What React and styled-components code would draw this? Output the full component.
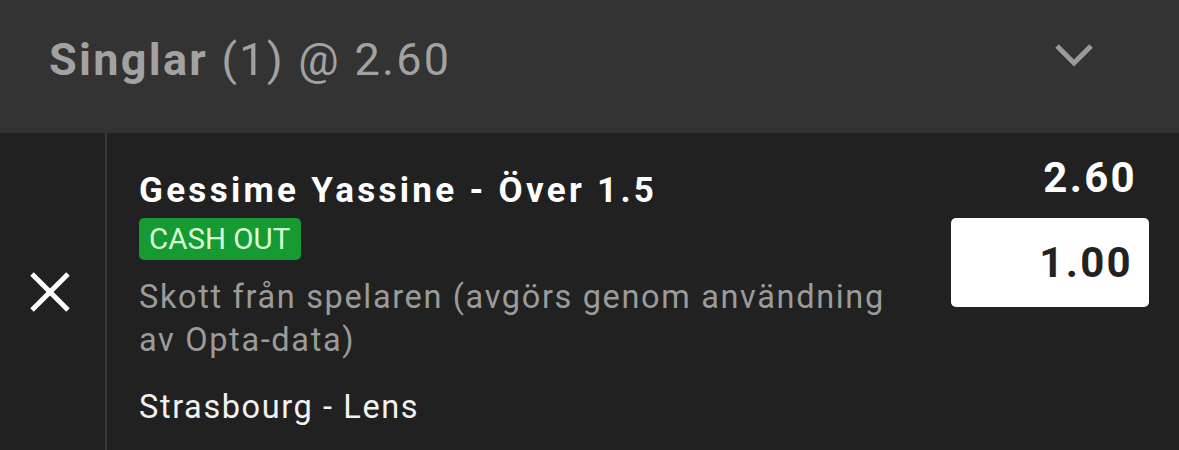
import React from "react";
import styled, { createGlobalStyle } from "styled-components";

const Global = createGlobalStyle`
  html, body { margin: 0; padding: 0; background: #212121; }
  body { font-family: Roboto, "Noto Sans", sans-serif; }
`;

const Wrap = styled.div`
  width: 1179px;
  height: 450px;
  overflow: hidden;
  background: #212121;
  display: flex;
  flex-direction: column;
`;

const Header = styled.div`
  height: 133px;
  flex: none;
  background: #333333;
  display: flex;
  align-items: flex-start;
  justify-content: space-between;
  padding: 0 86px 0 49px;
  box-sizing: border-box;
`;

const HeaderTitle = styled.div`
  margin-top: 31px;
  font-size: 45px;
  line-height: 58px;
  color: #a2a2a2;
  font-weight: 400;
  letter-spacing: 2.3px;
`;

const Bold = styled.span`
  font-weight: 700;
`;

const Chevron = styled.svg`
  margin-top: 43px;
  width: 38px;
  height: 27px;
`;

const Body = styled.div`
  flex: 1;
  display: flex;
`;

const RemoveCol = styled.div`
  width: 107px;
  flex: none;
  display: flex;
  align-items: center;
  justify-content: center;
  padding-right: 5px;
  box-sizing: border-box;
  border-right: 2px solid #3a3a3a;
`;

const Content = styled.div`
  flex: 1;
  padding: 38px 0 0 32px;
  display: flex;
  flex-direction: column;
  align-items: flex-start;
`;

const Selection = styled.div`
  font-size: 35px;
  line-height: 40px;
  font-weight: 700;
  color: #ffffff;
  letter-spacing: 3.3px;
`;

const Badge = styled.div`
  margin-top: 7px;
  background: #169a32;
  color: #d9ffd9;
  font-size: 29.5px;
  line-height: 42px;
  height: 42px;
  padding: 0 11px 0 10px;
  border-radius: 5px;
`;

const Market = styled.div`
  margin-top: 16px;
  font-size: 32.5px;
  line-height: 43px;
  color: #9b9b9b;
  letter-spacing: 1.65px;
  width: 790px;
`;

const Event = styled.div`
  margin-top: 25px;
  font-size: 32.5px;
  line-height: 40px;
  color: #f2f2f2;
  letter-spacing: 1.6px;
`;

const Side = styled.div`
  width: 198px;
  flex: none;
  margin-right: 30px;
  display: flex;
  flex-direction: column;
  align-items: flex-end;
  padding-top: 20px;
`;

const Odds = styled.div`
  font-size: 42px;
  line-height: 50px;
  font-weight: 700;
  color: #ffffff;
  letter-spacing: 2.3px;
  margin-right: 12px;
`;

const Stake = styled.div`
  margin-top: 15px;
  width: 198px;
  height: 89px;
  background: #ffffff;
  border-radius: 5px;
  box-sizing: border-box;
  display: flex;
  align-items: center;
  justify-content: flex-end;
  padding-right: 16px;
  font-size: 42px;
  font-weight: 700;
  color: #222222;
  letter-spacing: 2.3px;
`;

export default function App() {
  return (
    <Wrap>
      <Global />
      <Header>
        <HeaderTitle>
          <Bold>Singlar</Bold> (1) @ 2.60
        </HeaderTitle>
        <Chevron viewBox="0 0 38 27" fill="none">
          <path d="M2 3 L19 20 L36 3" stroke="#9a9a9a" strokeWidth="5" />
        </Chevron>
      </Header>
      <Body>
        <RemoveCol>
          <svg width="42" height="42" viewBox="0 0 42 42">
            <path d="M3 3 L39 39 M39 3 L3 39" stroke="#ffffff" strokeWidth="5" />
          </svg>
        </RemoveCol>
        <Content>
          <Selection>Gessime Yassine - Över 1.5</Selection>
          <Badge>CASH OUT</Badge>
          <Market>Skott från spelaren (avgörs genom användning av Opta-data)</Market>
          <Event>Strasbourg - Lens</Event>
        </Content>
        <Side>
          <Odds>2.60</Odds>
          <Stake>1.00</Stake>
        </Side>
      </Body>
    </Wrap>
  );
}
